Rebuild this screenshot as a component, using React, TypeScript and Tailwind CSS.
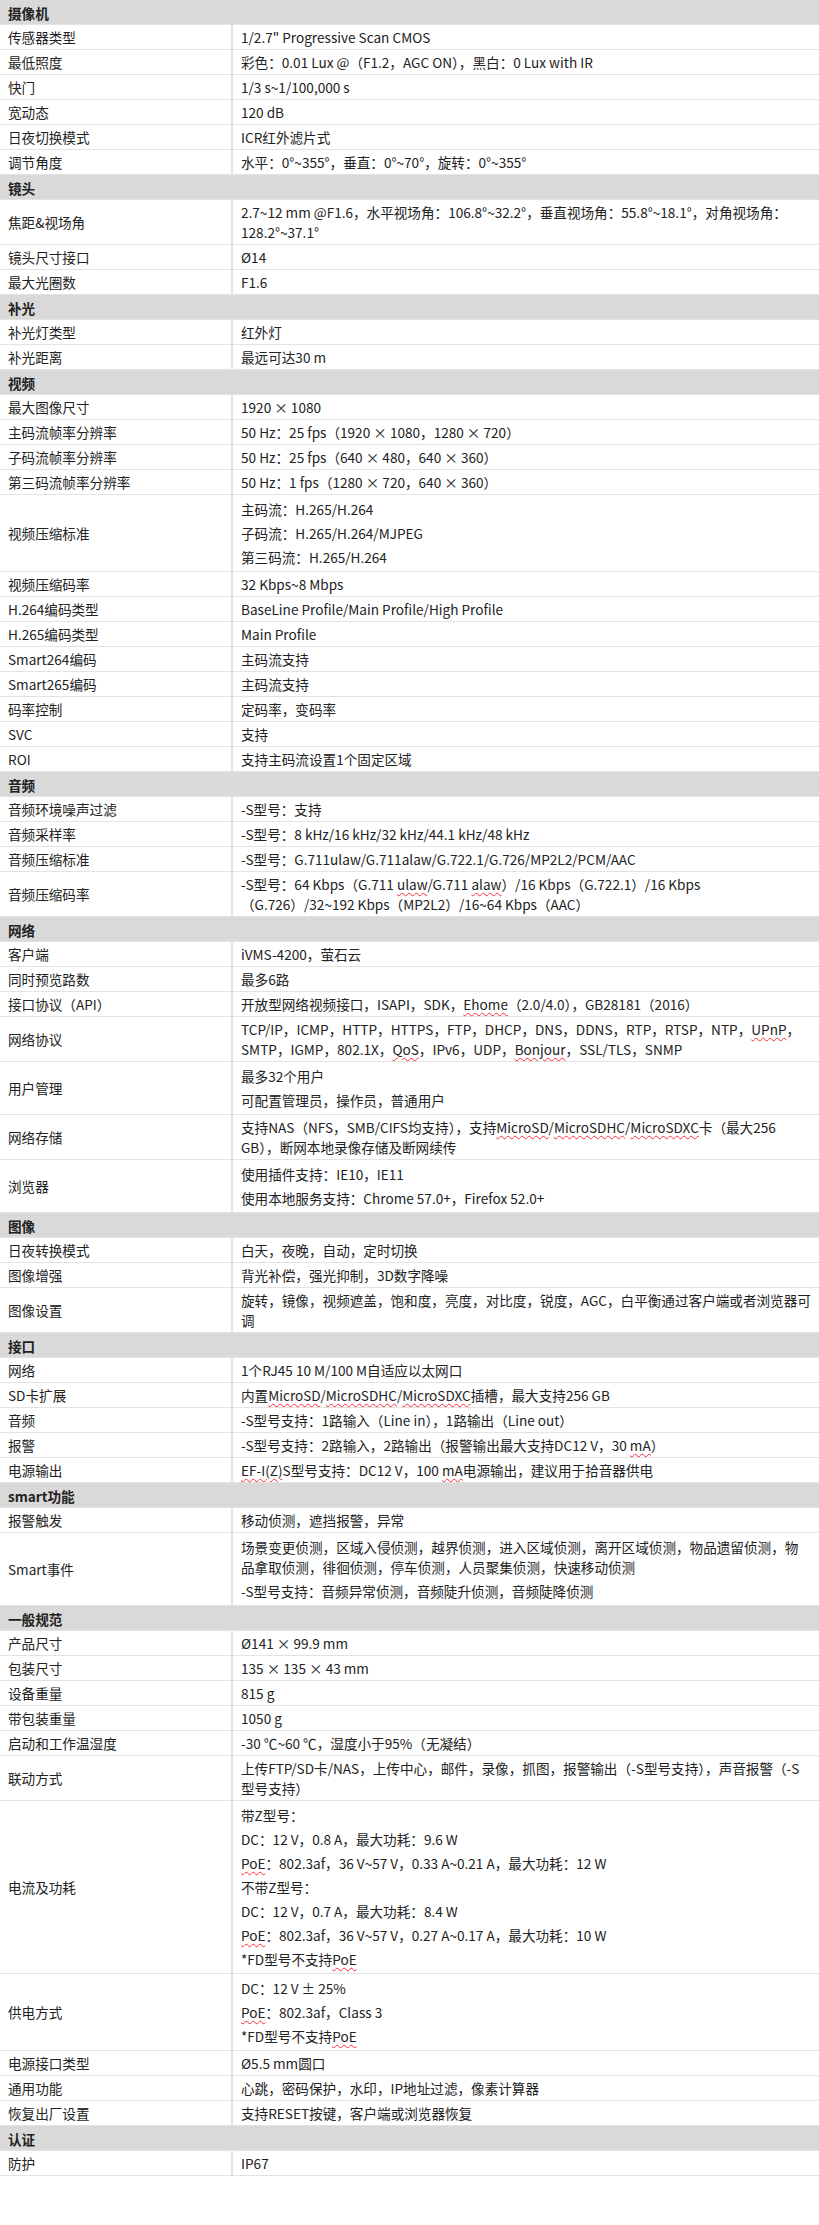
import React from 'react';

type Row = { h: string } | { k: string; v: React.ReactNode[] };

const W = ({ children }: { children: React.ReactNode }) => (
  <span className="underline decoration-wavy decoration-red-500 decoration-1 underline-offset-2">{children}</span>
);

const rows: Row[] = [
  { h: '摄像机' },
  { k: '传感器类型', v: ['1/2.7" Progressive Scan CMOS'] },
  { k: '最低照度', v: ['彩色：0.01 Lux @（F1.2，AGC ON），黑白：0 Lux with IR'] },
  { k: '快门', v: ['1/3 s~1/100,000 s'] },
  { k: '宽动态', v: ['120 dB'] },
  { k: '日夜切换模式', v: ['ICR红外滤片式'] },
  { k: '调节角度', v: ['水平：0°~355°，垂直：0°~70°，旋转：0°~355°'] },
  { h: '镜头' },
  { k: '焦距&视场角', v: ['2.7~12 mm @F1.6，水平视场角：106.8°~32.2°，垂直视场角：55.8°~18.1°，对角视场角：128.2°~37.1°'] },
  { k: '镜头尺寸接口', v: ['Ø14'] },
  { k: '最大光圈数', v: ['F1.6'] },
  { h: '补光' },
  { k: '补光灯类型', v: ['红外灯'] },
  { k: '补光距离', v: ['最远可达30 m'] },
  { h: '视频' },
  { k: '最大图像尺寸', v: ['1920 × 1080'] },
  { k: '主码流帧率分辨率', v: ['50 Hz：25 fps（1920 × 1080，1280 × 720）'] },
  { k: '子码流帧率分辨率', v: ['50 Hz：25 fps（640 × 480，640 × 360）'] },
  { k: '第三码流帧率分辨率', v: ['50 Hz：1 fps（1280 × 720，640 × 360）'] },
  { k: '视频压缩标准', v: ['主码流：H.265/H.264', '子码流：H.265/H.264/MJPEG', '第三码流：H.265/H.264'] },
  { k: '视频压缩码率', v: ['32 Kbps~8 Mbps'] },
  { k: 'H.264编码类型', v: ['BaseLine Profile/Main Profile/High Profile'] },
  { k: 'H.265编码类型', v: ['Main Profile'] },
  { k: 'Smart264编码', v: ['主码流支持'] },
  { k: 'Smart265编码', v: ['主码流支持'] },
  { k: '码率控制', v: ['定码率，变码率'] },
  { k: 'SVC', v: ['支持'] },
  { k: 'ROI', v: ['支持主码流设置1个固定区域'] },
  { h: '音频' },
  { k: '音频环境噪声过滤', v: ['-S型号：支持'] },
  { k: '音频采样率', v: ['-S型号：8 kHz/16 kHz/32 kHz/44.1 kHz/48 kHz'] },
  { k: '音频压缩标准', v: ['-S型号：G.711ulaw/G.711alaw/G.722.1/G.726/MP2L2/PCM/AAC'] },
  { k: '音频压缩码率', v: [<>-S型号：64 Kbps（G.711 <W>ulaw</W>/G.711 <W>alaw</W>）/16 Kbps（G.722.1）/16 Kbps（G.726）/32~192 Kbps（MP2L2）/16~64 Kbps（AAC）</>] },
  { h: '网络' },
  { k: '客户端', v: ['iVMS-4200，萤石云'] },
  { k: '同时预览路数', v: ['最多6路'] },
  { k: '接口协议（API）', v: [<>开放型网络视频接口，ISAPI，SDK，<W>Ehome</W>（2.0/4.0），GB28181（2016）</>] },
  { k: '网络协议', v: [<>TCP/IP，ICMP，HTTP，HTTPS，FTP，DHCP，DNS，DDNS，RTP，RTSP，NTP，<W>UPnP</W>，SMTP，IGMP，802.1X，<W>QoS</W>，IPv6，UDP，<W>Bonjour</W>，SSL/TLS，SNMP</>] },
  { k: '用户管理', v: ['最多32个用户', '可配置管理员，操作员，普通用户'] },
  { k: '网络存储', v: [<>支持NAS（NFS，SMB/CIFS均支持），支持<W>MicroSD</W>/<W>MicroSDHC</W>/<W>MicroSDXC</W>卡（最大256 GB），断网本地录像存储及断网续传</>] },
  { k: '浏览器', v: ['使用插件支持：IE10，IE11', '使用本地服务支持：Chrome 57.0+，Firefox 52.0+'] },
  { h: '图像' },
  { k: '日夜转换模式', v: ['白天，夜晚，自动，定时切换'] },
  { k: '图像增强', v: ['背光补偿，强光抑制，3D数字降噪'] },
  { k: '图像设置', v: ['旋转，镜像，视频遮盖，饱和度，亮度，对比度，锐度，AGC，白平衡通过客户端或者浏览器可调'] },
  { h: '接口' },
  { k: '网络', v: ['1个RJ45 10 M/100 M自适应以太网口'] },
  { k: 'SD卡扩展', v: [<>内置<W>MicroSD</W>/<W>MicroSDHC</W>/<W>MicroSDXC</W>插槽，最大支持256 GB</>] },
  { k: '音频', v: ['-S型号支持：1路输入（Line in），1路输出（Line out）'] },
  { k: '报警', v: [<>-S型号支持：2路输入，2路输出（报警输出最大支持DC12 V，30 <W>mA</W>）</>] },
  { k: '电源输出', v: [<><W>EF-I(Z)</W>S型号支持：DC12 V，100 <W>mA</W>电源输出，建议用于拾音器供电</>] },
  { h: 'smart功能' },
  { k: '报警触发', v: ['移动侦测，遮挡报警，异常'] },
  { k: 'Smart事件', v: ['场景变更侦测，区域入侵侦测，越界侦测，进入区域侦测，离开区域侦测，物品遗留侦测，物品拿取侦测，徘徊侦测，停车侦测，人员聚集侦测，快速移动侦测', '-S型号支持：音频异常侦测，音频陡升侦测，音频陡降侦测'] },
  { h: '一般规范' },
  { k: '产品尺寸', v: ['Ø141 × 99.9 mm'] },
  { k: '包装尺寸', v: ['135 × 135 × 43 mm'] },
  { k: '设备重量', v: ['815 g'] },
  { k: '带包装重量', v: ['1050 g'] },
  { k: '启动和工作温湿度', v: ['-30 ℃~60 ℃，湿度小于95%（无凝结）'] },
  { k: '联动方式', v: ['上传FTP/SD卡/NAS，上传中心，邮件，录像，抓图，报警输出（-S型号支持），声音报警（-S型号支持）'] },
  { k: '电流及功耗', v: ['带Z型号：', 'DC：12 V，0.8 A，最大功耗：9.6 W', <><W>PoE</W>：802.3af，36 V~57 V，0.33 A~0.21 A，最大功耗：12 W</>, '不带Z型号：', 'DC：12 V，0.7 A，最大功耗：8.4 W', <><W>PoE</W>：802.3af，36 V~57 V，0.27 A~0.17 A，最大功耗：10 W</>, <>*FD型号不支持<W>PoE</W></>] },
  { k: '供电方式', v: ['DC：12 V ± 25%', <><W>PoE</W>：802.3af，Class 3</>, <>*FD型号不支持<W>PoE</W></>] },
  { k: '电源接口类型', v: ['Ø5.5 mm圆口'] },
  { k: '通用功能', v: ['心跳，密码保护，水印，IP地址过滤，像素计算器'] },
  { k: '恢复出厂设置', v: ['支持RESET按键，客户端或浏览器恢复'] },
  { h: '认证' },
  { k: '防护', v: ['IP67'] },
];

export default function App() {
  return (
    <div className="w-[819px] bg-white text-[13.6px] leading-[20px] text-[#222]" style={{ fontFamily: '"Noto Sans CJK SC", "Noto Sans", sans-serif' }}>
      {rows.map((r, i) =>
        'h' in r ? (
          <div key={i} className="border-b border-[#e3e3e3] bg-[#d9d9d9] px-2 pt-[3px] pb-[1px] font-bold">
            {r.h}
          </div>
        ) : (
          <div key={i} className="flex border-b border-[#e3e3e3]">
            <div className="flex w-[233px] shrink-0 items-center border-r-2 border-[#e3e3e3] px-2">{r.k}</div>
            <div className="flex-1 px-2 pt-[2px] pb-[2px]">
              {r.v.map((p, j) => (
                <div key={j} className={r.v.length > 1 ? 'py-[2px]' : ''}>
                  {p}
                </div>
              ))}
            </div>
          </div>
        )
      )}
    </div>
  );
}
